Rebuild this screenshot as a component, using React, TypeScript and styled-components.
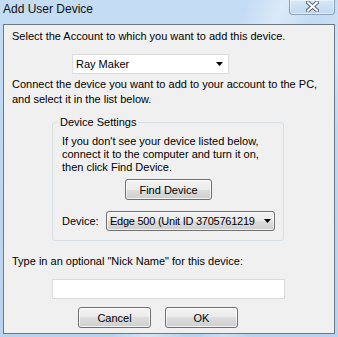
import styled, { createGlobalStyle } from "styled-components";

const GlobalStyle = createGlobalStyle`
  html,
  body {
    margin: 0;
    padding: 0;
  }
  body {
    width: 338px;
    height: 337px;
    overflow: hidden;
    font-family: "Liberation Sans", Arial, sans-serif;
    font-size: 11px;
    color: #000;
  }
  * {
    box-sizing: border-box;
  }
`;

const Frame = styled.div`
  width: 338px;
  height: 337px;
  display: flex;
  flex-direction: column;
  padding: 0 3px 3px;
  background:
    linear-gradient(112deg, transparent 52%, rgba(255, 255, 255, 0.4) 60%, transparent 68%),
    linear-gradient(112deg, transparent 70%, rgba(255, 255, 255, 0.25) 76%, transparent 82%),
    linear-gradient(180deg, #c4dcf4 0%, #b9d3ee 100%);
`;

const TitleBar = styled.div`
  height: 24px;
  flex: none;
  display: flex;
  justify-content: space-between;
  align-items: flex-start;
`;

const Title = styled.span`
  font-size: 12px;
  line-height: 15px;
  padding-top: 2px;
  color: #111;
`;

const CloseButton = styled.div`
  width: 46px;
  height: 16px;
  margin-top: -1px;
  border: 1px solid rgba(70, 95, 130, 0.5);
  border-radius: 0 0 4px 4px;
  background: linear-gradient(180deg, #d6e7f8 0%, #c2d9f1 100%);
  box-shadow: inset 0 0 0 1px rgba(255, 255, 255, 0.45);
  display: flex;
  justify-content: center;
  padding-top: 1px;
`;

const Client = styled.div`
  flex: 1;
  background: #f0f0f0;
  border: 1px solid #6e7883;
  display: flex;
  flex-direction: column;
  align-items: flex-start;
`;

const Text = styled.p<{ $top: number; $left?: number; $lh?: number }>`
  margin: ${(p) => p.$top}px 0 0 ${(p) => p.$left ?? 8}px;
  line-height: ${(p) => p.$lh ?? 15}px;
  white-space: nowrap;
`;

const ComboBox = styled.div<{ $top: number; $left: number; $width: number }>`
  margin: ${(p) => p.$top}px 0 0 ${(p) => p.$left}px;
  width: ${(p) => p.$width}px;
  height: 20px;
  flex: none;
  display: flex;
  align-items: center;
  padding: 0 5px 0 3px;
  background: #fff;
  border: 1px solid #dcdcdc;
  line-height: 15px;
`;

const DropButton = styled.div`
  width: 169px;
  height: 20px;
  display: flex;
  align-items: center;
  padding: 0 3px 0 3px;
  border: 1px solid #707070;
  border-radius: 3px;
  background: linear-gradient(180deg, #f2f2f2 0%, #ebebeb 50%, #dddddd 50%, #cfcfcf 100%);
  box-shadow: inset 0 0 0 1px rgba(255, 255, 255, 0.7);
  line-height: 15px;
`;

const ComboText = styled.span<{ $clip?: number }>`
  flex: ${(p) => (p.$clip ? "none" : "1")};
  width: ${(p) => (p.$clip ? `${p.$clip}px` : "auto")};
  overflow: hidden;
  white-space: nowrap;
  letter-spacing: ${(p) => (p.$clip ? "-0.25px" : "0")};
`;

const Arrow = styled.svg`
  margin-left: auto;
  flex: none;
`;

const GroupBox = styled.fieldset`
  margin: 8px 0 0 48px;
  padding: 0 8px 9px 9px;
  width: 232px;
  min-inline-size: 0;
  border: 1px solid #d5dfe5;
  border-radius: 3px;
  display: flex;
  flex-direction: column;
  align-items: flex-start;
`;

const Legend = styled.legend`
  margin-left: -4px;
  padding: 0 2px;
  line-height: 15px;
`;

const Button = styled.button<{ $width: number }>`
  width: ${(p) => p.$width}px;
  height: 21px;
  padding: 0;
  font: inherit;
  color: #000;
  border: 1px solid #707070;
  border-radius: 3px;
  background: linear-gradient(180deg, #f2f2f2 0%, #ebebeb 50%, #dddddd 50%, #cfcfcf 100%);
  box-shadow: inset 0 0 0 1px rgba(255, 255, 255, 0.75);
`;

const FindButton = styled(Button)`
  margin-top: 5px;
  align-self: center;
`;

const DeviceRow = styled.div`
  margin-top: 11px;
  display: flex;
  align-items: center;
`;

const DeviceLabel = styled.span`
  width: 44px;
`;

const TextInput = styled.input`
  margin: 10px 0 0 48px;
  width: 233px;
  height: 20px;
  border: 1px solid #dcdcdc;
  background: #fff;
  outline: none;
  font: inherit;
`;

const ButtonRow = styled.div`
  margin: 8px 0 0 74px;
  display: flex;
  gap: 14px;
`;

function DownArrow() {
  return (
    <Arrow width="7" height="4" viewBox="0 0 7 4">
      <path d="M0 0H7L3.5 4Z" fill="#000" />
    </Arrow>
  );
}

export default function App() {
  return (
    <>
      <GlobalStyle />
      <Frame>
        <TitleBar>
          <Title>Add User Device</Title>
          <CloseButton>
            <svg width="13" height="11" viewBox="0 0 13 11">
              <path
                d="M2 1.5L11 9.5M11 1.5L2 9.5"
                stroke="#5a6470"
                strokeWidth="4"
                strokeLinecap="square"
              />
              <path
                d="M2 1.5L11 9.5M11 1.5L2 9.5"
                stroke="#fff"
                strokeWidth="2"
                strokeLinecap="square"
              />
            </svg>
          </CloseButton>
        </TitleBar>
        <Client>
          <Text $top={4}>Select the Account to which you want to add this device.</Text>
          <ComboBox $top={10} $left={68} $width={157}>
            <ComboText>Ray Maker</ComboText>
            <DownArrow />
          </ComboBox>
          <Text $top={3}>
            Connect the device you want to add to your account to the PC,
            <br />
            and select it in the list below.
          </Text>
          <GroupBox>
            <Legend>Device Settings</Legend>
            <Text $top={5} $left={0} $lh={13}>
              If you don't see your device listed below,
              <br />
              connect it to the computer and turn it on,
              <br />
              then click Find Device.
            </Text>
            <FindButton $width={87}>Find Device</FindButton>
            <DeviceRow>
              <DeviceLabel>Device:</DeviceLabel>
              <DropButton>
                <ComboText $clip={146}>Edge 500 (Unit ID 3705761219</ComboText>
                <DownArrow />
              </DropButton>
            </DeviceRow>
          </GroupBox>
          <Text $top={13}>Type in an optional "Nick Name" for this device:</Text>
          <TextInput type="text" />
          <ButtonRow>
            <Button $width={73}>Cancel</Button>
            <Button $width={73}>OK</Button>
          </ButtonRow>
        </Client>
      </Frame>
    </>
  );
}
